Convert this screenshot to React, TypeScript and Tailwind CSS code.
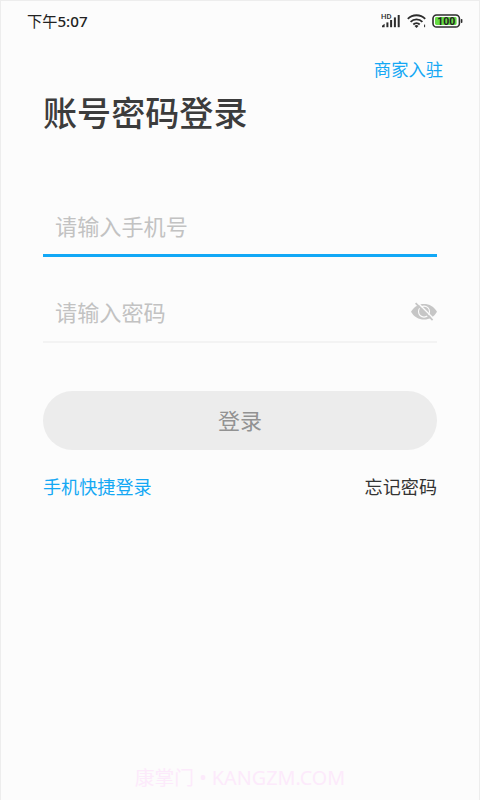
import React, { useState } from 'react';

const SignalIcon = () => (
  <svg width="20" height="18" viewBox="0 0 20 18" fill="#2c2c2c">
    <text x="0" y="6.8" fontSize="7.6" fontWeight="500" textLength="10.5" lengthAdjust="spacingAndGlyphs" fontFamily="Roboto, sans-serif">HD</text>
    <path d="M1 15.2v-1.4l2.6-2v3.4z" />
    <rect x="5.4" y="10.4" width="2" height="4.8" />
    <rect x="9.1" y="8" width="2" height="7.2" />
    <rect x="12.9" y="5.4" width="2" height="9.8" />
    <rect x="16.7" y="3" width="2" height="12.2" />
  </svg>
);

const WifiIcon = () => (
  <svg width="20" height="18" viewBox="0 0 20 18" fill="none" stroke="#2c2c2c" strokeWidth="1.8">
    <path d="M.8 6.8a12.4 12.4 0 0 1 17.4 0" />
    <path d="M3.6 9.8a8.3 8.3 0 0 1 11.8 0" />
    <path d="M6.3 12.5a4.6 4.6 0 0 1 6.4 0" />
    <path d="M9.5 16 7.5 13.9a3 3 0 0 1 4 0z" fill="#2c2c2c" stroke="none" />
    <path d="M17.6 12.6v2.6" strokeWidth="1" />
  </svg>
);

const BatteryIcon = () => (
  <svg width="32" height="14" viewBox="0 0 32 14">
    <rect x="1" y="1" width="26.4" height="12" rx="3.6" fill="#fcfcfc" stroke="#2c2c2c" strokeWidth="1.6" />
    <rect x="3" y="3" width="21.6" height="8" rx="1.4" fill="#66dc42" />
    <rect x="28.8" y="5" width="1.6" height="4" rx="0.7" fill="#2c2c2c" />
    <text x="14.2" y="10.7" textAnchor="middle" fontSize="10.3" fontWeight="700" textLength="18" lengthAdjust="spacingAndGlyphs" fill="#222222" fontFamily="Roboto, sans-serif">100</text>
  </svg>
);

const HiddenEyeIcon = () => (
  <svg width="26" height="20" viewBox="0 0 26 20" fill="none">
    <path d="M0 9.8C3 4.6 7.6 2 13 2s10 2.6 13 7.8c-3 5.2-7.6 7.8-13 7.8S3 15 0 9.8z" fill="#c6c6c6" />
    <circle cx="13" cy="9.6" r="5.5" stroke="#fcfcfc" strokeWidth="1.1" />
    <path d="M6.2.2 23.2 17.2" stroke="#fcfcfc" strokeWidth="1.5" />
    <path d="M4.6 1.2 21.6 18.2" stroke="#c6c6c6" strokeWidth="1.7" />
  </svg>
);

const StatusBar = () => (
  <div className="flex h-[40px] items-center justify-between pl-[26px] pr-[15px]">
    <span className="pt-[2px] text-[15.2px] leading-none text-[#222222]">
      下午<span className="font-['Noto_Sans'] font-medium">5:07</span>
    </span>
    <div className="flex items-center">
      <SignalIcon />
      <div className="ml-[6px]"><WifiIcon /></div>
      <div className="ml-[5px]"><BatteryIcon /></div>
    </div>
  </div>
);

function App() {
  const [phone, setPhone] = useState('');
  const [password, setPassword] = useState('');

  return (
    <div className="flex h-[800px] w-[480px] flex-col overflow-hidden border-x border-t border-[#ededed] bg-[#fcfcfc] font-['Roboto','Noto_Sans_CJK_SC',sans-serif]">
      <StatusBar />

      <div className="flex h-[40px] justify-end pr-[36px] pt-[17px]">
        <a className="text-[17.3px] leading-[24px] text-[#14a8f4]">商家入驻</a>
      </div>

      <main className="flex flex-col px-[42px]">
        <h1 className="mt-[8px] h-[50px] text-[34.1px] font-medium leading-[50px] text-[#3c3c3c]">账号密码登录</h1>

        <div className="mt-[60px] h-[58px] border-b-[3px] border-[#12a8f6] pl-[12px]">
          <input
            className="h-[55px] w-full pt-px text-[22.15px] outline-none placeholder:text-[#c2c2c2]"
            placeholder="请输入手机号"
            value={phone}
            onChange={(e) => setPhone(e.target.value)}
          />
        </div>

        <div className="mt-[27px] flex h-[59px] items-center border-b-2 border-[#f3f3f3] pl-[12px]">
          <input
            type="password"
            className="h-[57px] min-w-0 flex-1 pt-px text-[22.15px] outline-none placeholder:text-[#c2c2c2]"
            placeholder="请输入密码"
            value={password}
            onChange={(e) => setPassword(e.target.value)}
          />
          <div className="pb-[2px]"><HiddenEyeIcon /></div>
        </div>

        <button className="mt-[48px] h-[58.5px] rounded-full bg-[#ececec] pt-[3px] text-[22px] text-[#929292]">登录</button>

        <div className="mt-[25.5px] flex justify-between text-[18.1px] leading-[26px]">
          <a className="text-[#14a8f4]">手机快捷登录</a>
          <a className="text-[#333333]">忘记密码</a>
        </div>
      </main>

      <footer className="mt-auto flex h-[36px] justify-center whitespace-pre font-['Noto_Sans','Noto_Sans_CJK_SC',sans-serif] text-[19.8px] leading-[28px] text-[#fceafb]">
        康掌门 • KANGZM.COM
      </footer>
    </div>
  );
}

export default App;
